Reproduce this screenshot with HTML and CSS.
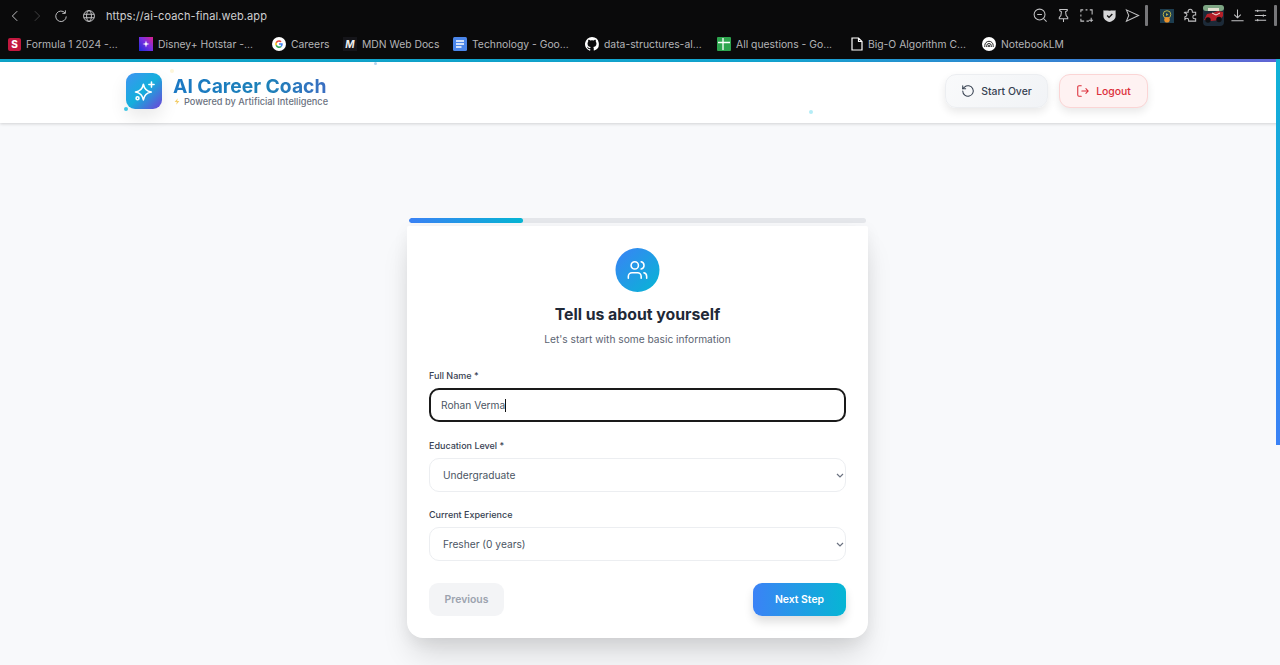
FILE: index.html
```html
<!DOCTYPE html>
<html lang="en">
<head>
<meta charset="utf-8">
<title>AI Career Coach</title>
<link rel="stylesheet" href="styles.css">
</head>
<body>
<div class="chrome">
  <div class="toolbar">
    <div class="nav">
      <svg class="ic nav-back" viewBox="0 0 16 16"><path d="M10.500 2.500 5 8l5.500 5.500"/></svg>
      <svg class="ic nav-fwd" viewBox="0 0 16 16"><path d="M5.500 2.500 11 8l-5.500 5.500"/></svg>
      <svg class="ic nav-reload" viewBox="0 0 16 16"><path d="M12.600 4.500A6 6 0 1 0 14 8.500"/><path d="M13 1.500v3.500H9.500"/></svg>
      <svg class="ic nav-globe" viewBox="0 0 16 16"><circle cx="8" cy="8" r="6.200"/><ellipse cx="8" cy="8" rx="2.800" ry="6.200"/><path d="M2 6h12M2 10h12"/></svg>
      <span class="url">https://ai-coach-final.web.app</span>
    </div>
    <div class="tools">
      <svg class="ic tool" viewBox="0 0 16 16"><circle cx="7" cy="7" r="5.800"/><path d="M4.500 7h5M11.200 11.200l3.300 3.300"/></svg>
      <svg class="ic tool" viewBox="0 0 16 16"><path d="M4 1.500h8v1.500l-1.800 1 .6 4 1.700 2V11.500H3.500V10l1.700-2 .6-4L4 3zM8 11.500V15"/></svg>
      <svg class="ic tool" viewBox="0 0 16 16"><path d="M4.500 2H2v2.500M7 2h2M11.500 2H14v5M2 7v2M2 11.500V14h3.500M8 14h2.500M13 10.500v4.500M10.500 13H15"/></svg>
      <svg class="tool" viewBox="0 0 16 16"><path class="shield" d="M1.500 2.500c2 .5 11 .5 13 0v6c0 3.500-3 5.500-6.500 6.500-3.500-1-6.500-3-6.500-6.500z"/><path class="shield-tick" d="m5.500 8 2 2 3.500-3.500"/></svg>
      <svg class="ic tool" viewBox="0 0 16 16"><path d="M1.500 2 14.500 8 1.500 14 4 8z"/></svg>
      <span class="sep"></span>
      <svg class="ext" viewBox="0 0 14 14"><rect width="14" height="14" fill="#1d3d4f"/><circle cx="7" cy="5.500" r="3.800" fill="none" stroke="#b9b347"/><path d="M6 4l2.500 1.500L6 7z" fill="#b9b347"/><circle cx="7" cy="10.800" r="2.800" fill="#e8912c"/></svg>
      <svg class="ic puzzle" viewBox="0 0 16 16"><path d="M5.500 3.500a2.200 2.200 0 0 1 4.400 0l.1 1h3.500v3h-1a2 2 0 0 0 0 4h1V14H6v-1a2 2 0 0 0-4 0V9.500l1-.5a1.800 1.800 0 0 0 0-3.400L1.500 5l.5-.500h3.500z"/></svg>
      <svg class="avatar" viewBox="0 0 21 21"><rect width="21" height="21" rx="4" fill="#1c2a38"/><rect width="21" height="6" rx="3" fill="#7da583"/><rect x="5" y="3" width="11" height="3" fill="#e4e0d2"/><path d="M1 15l3-6 5-1 6-2 5 1v4l-3 4-9 1z" fill="#b51f28"/><path d="M9 8l4 2 4-2" stroke="#f2e9e0" fill="none"/><circle cx="5" cy="15" r="2.700" fill="#0e0e10"/><circle cx="16" cy="14.500" r="2.700" fill="#0e0e10"/></svg>
      <svg class="ic tool dl" viewBox="0 0 16 16"><path d="M8 1.500v9M4.500 7 8 10.500 11.500 7M1.500 13.500h13"/></svg>
      <svg class="ic tool menu" viewBox="0 0 16 16"><path d="M2 3h12M2 8h12M2 13h12M5 1.800v2.400M11 6.800v2.400M5 11.800v2.400"/></svg>
      <span class="sep sep-end"></span>
    </div>
  </div>
  <div class="bookmarks">
    <a class="bm bm1"><span class="bi bi-s">S</span>Formula 1 2024 -...</a>
    <a class="bm bm2"><svg class="bi" viewBox="0 0 14 14"><defs><linearGradient id="dh" x1="0" y1="1" x2="1" y2="0"><stop offset="0" stop-color="#1d2bd8"/><stop offset=".55" stop-color="#7b2fe0"/><stop offset="1" stop-color="#e0208c"/></linearGradient></defs><rect width="14" height="14" fill="url(#dh)"/><path d="M7 3.500l.8 2.700 2.700.8-2.700.8L7 10.500l-.8-2.700L3.500 7l2.700-.8z" fill="#fff"/></svg>Disney+ Hotstar -...</a>
    <a class="bm bm3"><svg class="bi" viewBox="0 0 14 14"><circle cx="7" cy="7" r="7" fill="#fff"/><path d="M7 3.200a3.800 3.800 0 0 1 2.600 1L8.500 5.300A2.300 2.300 0 0 0 4.900 6.200L3.600 5.200A3.800 3.800 0 0 1 7 3.200z" fill="#ea4335"/><path d="M3.600 5.200l1.300 1a2.300 2.300 0 0 0 0 1.600l-1.300 1a3.800 3.800 0 0 1 0-3.600z" fill="#fbbc05"/><path d="M3.600 8.800l1.300-1A2.300 2.300 0 0 0 8.400 9l1.200 1A3.800 3.800 0 0 1 3.600 8.800z" fill="#34a853"/><path d="M7 6.200h3.700a3.800 3.800 0 0 1-1.100 3.800L8.400 9a1.800 1.800 0 0 0 .7-1.300H7z" fill="#4285f4"/></svg>Careers</a>
    <a class="bm bm4"><span class="bi bi-m">M</span>MDN Web Docs</a>
    <a class="bm bm5"><svg class="bi" viewBox="0 0 14 14"><rect width="14" height="14" rx="1.500" fill="#4b86ea"/><path d="M3 4h8M3 7h8M3 10h5.500" stroke="#fff" stroke-width="1.400"/></svg>Technology - Goo...</a>
    <a class="bm bm6"><svg class="bi" viewBox="0 0 16 16"><path fill="#fff" d="M8 0a8 8 0 0 0-2.500 15.600c.4.100.5-.2.500-.4v-1.400c-2.200.5-2.700-1-2.700-1-.4-.9-.9-1.200-.9-1.200-.7-.5.100-.5.100-.5.800.100 1.200.8 1.200.8.700 1.200 1.900.9 2.300.7.100-.5.300-.9.500-1.100-1.800-.2-3.600-.9-3.600-4 0-.9.300-1.600.8-2.100-.1-.2-.4-1 .1-2.100 0 0 .7-.2 2.200.8a7.600 7.600 0 0 1 4 0c1.500-1 2.200-.8 2.200-.8.400 1.100.2 1.900.1 2.100.5.600.8 1.300.8 2.100 0 3.100-1.900 3.700-3.700 3.900.3.300.6.800.6 1.500v2.200c0 .2.100.5.600.4A8 8 0 0 0 8 0z"/></svg>data-structures-al...</a>
    <a class="bm bm7"><svg class="bi" viewBox="0 0 14 14"><rect width="14" height="14" rx="1" fill="#2da44e"/><path d="M1 5.500h12M6 1v12" stroke="#fff" stroke-width="1.300"/></svg>All questions - Go...</a>
    <a class="bm bm8"><svg class="bi bi-doc" viewBox="0 0 12 14"><path d="M1 1h6.500L11 4.500V13H1zM7.500 1v3.500H11" fill="none" stroke="#fff" stroke-width="1.200"/></svg>Big-O Algorithm C...</a>
    <a class="bm bm9"><svg class="bi" viewBox="0 0 14 14"><circle cx="7" cy="7" r="7" fill="#fff"/><path d="M2.800 10V8.500a4.200 4.200 0 0 1 8.400 0V10M4.700 10V8.800a2.300 2.300 0 0 1 4.600 0V10M6.300 10V9a.7.7 0 0 1 1.400 0v1" fill="none" stroke="#111" stroke-width=".9"/></svg>NotebookLM</a>
  </div>
</div>

<div class="page">
  <div class="accent"></div>
  <header class="header">
    <div class="brand">
      <div class="logo">
        <svg viewBox="0 0 24 24"><path d="M11 5.500c.7 4 2.500 6.300 7 7-4.500.7-6.300 3-7 7-.7-4-2.500-6.300-7-7 4.500-.7 6.300-3 7-7z"/><path d="M18.200 3.500v4.600M15.900 5.800h4.600"/><circle cx="5.800" cy="18" r="1.300"/></svg>
      </div>
      <div class="brand-text">
        <div class="brand-name">AI Career Coach</div>
        <div class="brand-sub"><svg viewBox="0 0 10 10"><path d="M6 .8 2 5.500h2.800L4 9.200l4-4.700H5.200z"/></svg>Powered by Artificial Intelligence</div>
      </div>
    </div>
    <div class="actions">
      <button class="btn btn-over"><svg viewBox="0 0 24 24"><path d="M3 12a9 9 0 1 0 3-6.700L3 8"/><path d="M3 3v5h5"/></svg>Start Over</button>
      <button class="btn btn-out"><svg viewBox="0 0 24 24"><path d="M9 3H5a2 2 0 0 0-2 2v14a2 2 0 0 0 2 2h4"/><path d="M10 12h11M17 8l4 4-4 4"/></svg>Logout</button>
    </div>
  </header>

  <main class="main">
    <div class="wizard">
      <div class="progress"><div class="progress-fill"></div></div>
      <section class="card">
        <div class="step-icon">
          <svg viewBox="0 0 24 24"><circle cx="9" cy="7" r="4"/><path d="M2 21v-2a4 4 0 0 1 4-4h6a4 4 0 0 1 4 4v2"/><path d="M16 3.100a4 4 0 0 1 0 7.800"/><path d="M22 21v-2a4 4 0 0 0-3-3.900"/></svg>
        </div>
        <h1 class="title">Tell us about yourself</h1>
        <p class="subtitle">Let's start with some basic information</p>
        <div class="field field-name">
          <label class="label">Full Name *</label>
          <div class="input" role="textbox">Rohan Verma<span class="caret"></span></div>
        </div>
        <div class="field">
          <label class="label">Education Level *</label>
          <div class="select-wrap">
            <select class="select"><option>Undergraduate</option></select>
            <svg class="chev" viewBox="0 0 8 5"><path d="M1 1l3 3 3-3"/></svg>
          </div>
        </div>
        <div class="field">
          <label class="label">Current Experience</label>
          <div class="select-wrap">
            <select class="select"><option>Fresher (0 years)</option></select>
            <svg class="chev" viewBox="0 0 8 5"><path d="M1 1l3 3 3-3"/></svg>
          </div>
        </div>
        <div class="buttons">
          <button class="prev">Previous</button>
          <button class="next">Next Step</button>
        </div>
      </section>
    </div>
  </main>

  <span class="dot dot-a"></span>
  <span class="dot dot-b"></span>
  <span class="dot dot-c"></span>
  <span class="dot dot-d"></span>
  <span class="scroll"></span>
</div>
</body>
</html>
```

FILE: styles.css
```css
* { box-sizing: border-box; }
html, body { margin: 0; height: 665px; overflow: hidden; }
body { font-family: Inter, "Liberation Sans", sans-serif; background: #f8f9fb; color: #1f2937; }

.chrome { height: 59px; background: #0a0a0b; color: #c9c9cb; }
.toolbar { height: 31px; display: flex; justify-content: space-between; align-items: center; }
.nav { display: flex; align-items: center; padding-left: 8px; }
.ic { fill: none; stroke: #c4c4c6; stroke-width: 1.100; width: 14px; height: 14px; flex: none; }
.nav-fwd { margin-left: 8px; opacity: .3; }
.nav-reload { margin-left: 10px; }
.nav-globe { margin-left: 14px; }
.url { margin-left: 10px; font-size: 11px; letter-spacing: .1px; color: #cfcfd1; }
.tools { display: flex; align-items: center; gap: 8px; padding-right: 3px; }
.tool { width: 15px; height: 15px; flex: none; }
.shield { fill: #d7d7d9; }
.shield-tick { fill: none; stroke: #111; stroke-width: 1.500; }
.sep { width: 3px; height: 21px; background: #77777a; border-radius: 1px; margin: 0 4px 0 -2.500px; }
.ext { width: 14px; height: 14px; flex: none; }
.puzzle { width: 15px; height: 15px; margin-left: 1px; }
.avatar { width: 21px; height: 21px; flex: none; margin-left: -3px; }
.dl { margin-left: -2px; }
.menu { margin-left: -.500px; }
.sep-end { margin: 0 0 0 -1.500px; }

.bookmarks { height: 28px; display: flex; align-items: center; padding-left: 8px; padding-bottom: 2px; font-size: 10.350px; color: #b4b4b7; }
.bm { display: flex; align-items: center; gap: 5px; white-space: nowrap; flex: none; }
.bm1 { width: 131px; }
.bm2 { width: 133px; }
.bm3 { width: 71px; }
.bm4 { width: 110px; }
.bm5 { width: 132px; }
.bm6 { width: 132px; }
.bm7 { width: 134px; }
.bm8 { width: 131px; }
.bi { width: 14px; height: 14px; flex: none; }
.bi-s { width: 13px; height: 13px; background: #c2183f; border-radius: 2px; color: #fff; font-size: 10px; font-weight: 800; text-align: center; line-height: 13px; }
.bi-m { background: #15151a; color: #eee; font-size: 10px; font-weight: 700; font-style: italic; text-align: center; line-height: 14px; }
.bi-doc { width: 12px; }

.page { position: relative; height: 606px; overflow: hidden; }
.accent { height: 3px; background: linear-gradient(90deg, #0ea5c9 0%, #13a6d2 60%, #3b82d6 85%, #6366d8 100%); }
.header { height: 61px; background: #fff; display: flex; justify-content: space-between; align-items: center; padding: 0 132px 3px 126px; box-shadow: 0 1px 3px rgba(0,0,0,.16); position: relative; }
.brand { display: flex; align-items: center; gap: 11px; }
.logo { width: 36px; height: 36px; border-radius: 9px; background: linear-gradient(135deg, #3f93f2 0%, #14afdc 50%, #7040d8 100%); display: flex; align-items: center; justify-content: center; box-shadow: 0 8px 18px rgba(0,0,0,.09); }
.logo svg { width: 27px; height: 27px; fill: none; stroke: #fff; stroke-width: 1.400; stroke-linecap: round; stroke-linejoin: round; }
.brand-text { display: flex; flex-direction: column; margin-top: 1px; }
.brand-name { font-size: 19.300px; font-weight: 700; line-height: 20px; background: linear-gradient(90deg, #1b78c4, #1c81b8 60%, #3b6ec2); -webkit-background-clip: text; background-clip: text; color: transparent; }
.brand-sub { display: flex; align-items: center; gap: 3px; font-size: 9.200px; font-weight: 500; line-height: 11px; color: #6b7280; }
.brand-sub svg { width: 8px; height: 9px; fill: #f3cd6a; }
.actions { display: flex; gap: 11px; }
.btn { height: 34px; border-radius: 11px; font: 500 10.400px Inter, sans-serif; display: flex; align-items: center; justify-content: center; gap: 6px; box-shadow: 0 4px 8px rgba(0,0,0,.09); }
.btn svg { width: 14px; height: 14px; fill: none; stroke: currentColor; stroke-width: 1.800; stroke-linecap: round; stroke-linejoin: round; }
.btn-over { width: 103px; background: linear-gradient(135deg, #f9fafb, #f1f3f6); border: 1px solid #eceef1; color: #374151; }
.btn-out { width: 89px; background: #fef2f2; border: 1px solid #fbd5d5; color: #dc2f3a; }

.main { display: flex; justify-content: center; padding: 95px 5px 0 0; }
.wizard { width: 461px; }
.progress { height: 5px; margin: 0 2px 3px; background: #e5e7eb; border-radius: 3px; overflow: hidden; }
.progress-fill { width: 25%; height: 100%; background: linear-gradient(90deg, #3b82f6, #06b6d4); border-radius: 3px; }
.card { height: 412px; background: #fff; border-radius: 2px 2px 16px 16px; padding: 22px; box-shadow: 0 20px 30px -5px rgba(0,0,0,.14), 0 4px 16px rgba(0,0,0,.06); }
.step-icon { width: 44px; height: 44px; margin: 0 auto; transform: translateX(-.5px); border-radius: 50%; background: linear-gradient(135deg, #3b82f6, #06b6d4); display: flex; align-items: center; justify-content: center; }
.step-icon svg { width: 22px; height: 22px; fill: none; stroke: #fff; stroke-width: 1.700; stroke-linecap: round; stroke-linejoin: round; }
.title { margin: 12px 0 0; text-align: center; font-size: 15.800px; line-height: 22px; font-weight: 700; color: #1f2937; }
.subtitle { margin: 6px 0 0; text-align: center; font-size: 10.200px; line-height: 14px; color: #5b6472; }
.field { margin-top: 17.500px; }
.field-name { margin-top: 24px; }
.label { display: block; font-size: 9px; font-weight: 500; line-height: 12px; color: #374151; margin-bottom: 6px; }
.input { height: 34px; border: 2px solid #1a1a1a; border-radius: 10px; padding: 0 10px; font-size: 10.200px; line-height: 30px; color: #4b5563; background: #fff; }
.caret { display: inline-block; width: 1px; height: 13px; background: #111; vertical-align: -3px; }
.select-wrap { position: relative; }
.select { appearance: none; display: block; width: 100%; height: 34px; border: 1px solid #eceef1; border-radius: 10px; padding: 0 13px; font: 400 10.200px Inter, sans-serif; color: #4b5563; background: #fff; }
.chev { position: absolute; right: 2px; top: 15px; width: 8px; height: 5px; fill: none; stroke: #6b7280; stroke-width: 1.200; }
.buttons { display: flex; justify-content: space-between; margin-top: 22px; }
.prev, .next { height: 33px; border: 0; border-radius: 9px; font: 600 10.400px Inter, sans-serif; }
.prev { width: 75px; background: #f3f4f6; color: #9ca3af; }
.next { width: 93px; color: #fff; background: linear-gradient(90deg, #3b82f6, #06b6d4); box-shadow: 0 6px 10px rgba(0,0,0,.13); }

.dot { position: absolute; border-radius: 50%; }
.dot-a { left: 124px; top: 48px; width: 4px; height: 4px; background: #3fc6e4; }
.dot-b { left: 374px; top: 3px; width: 3px; height: 3px; background: #b5d4ee; }
.dot-c { left: 809px; top: 51px; width: 4px; height: 4px; background: #b4ecf6; }
.dot-d { left: 170px; top: 10px; width: 4px; height: 4px; background: #fdf6da; }
.scroll { position: absolute; right: 0; top: 0; width: 4px; height: 386px; background: linear-gradient(180deg, #0fb3d6, #3b82f6); }
```
